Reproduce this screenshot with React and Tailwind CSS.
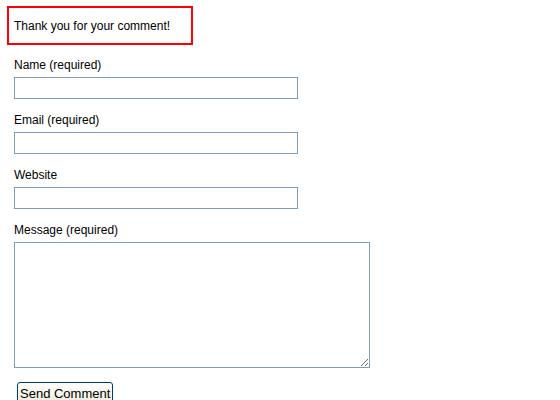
export default function App() {
  const field = "block w-[284px] h-[22px] border border-[#7f9db9] bg-white px-[2px] text-[12px] outline-none";
  return (
    <div className="w-[560px] h-[400px] overflow-hidden bg-white text-black text-[12px] leading-[14px]" style={{ fontFamily: '"Liberation Sans", Arial, sans-serif' }}>
      <div className="pt-[6px] pl-[7px]">
        <div className="w-[186px] h-[39px] border-2 border-[#ff0000] flex items-center pl-[5px]">
          Thank you for your comment!
        </div>
      </div>
      <form className="pl-[14px] pt-[12px]" onSubmit={(e) => e.preventDefault()}>
        <div className="mb-[13px]">
          <label className="block pt-[1px] mb-[5px]">Name (required)</label>
          <input type="text" className={field} />
        </div>
        <div className="mb-[13px]">
          <label className="block pt-[1px] mb-[5px]">Email (required)</label>
          <input type="text" className={field} />
        </div>
        <div className="mb-[13px]">
          <label className="block pt-[1px] mb-[5px]">Website</label>
          <input type="text" className={field} />
        </div>
        <div className="mb-[14px]">
          <label className="block pt-[1px] mb-[5px]">Message (required)</label>
          <textarea className="block w-[356px] h-[126px] border border-[#7f9db9] bg-white p-[2px] text-[12px] outline-none resize" />
        </div>
        <div className="pl-[3px]">
          <button type="submit" className="h-[24px] px-[2px] border border-[#003c74] rounded-[3px] bg-gradient-to-b from-white to-[#ece9d8] text-[13px] leading-[16px] text-black">
            Send Comment
          </button>
        </div>
      </form>
    </div>
  );
}
